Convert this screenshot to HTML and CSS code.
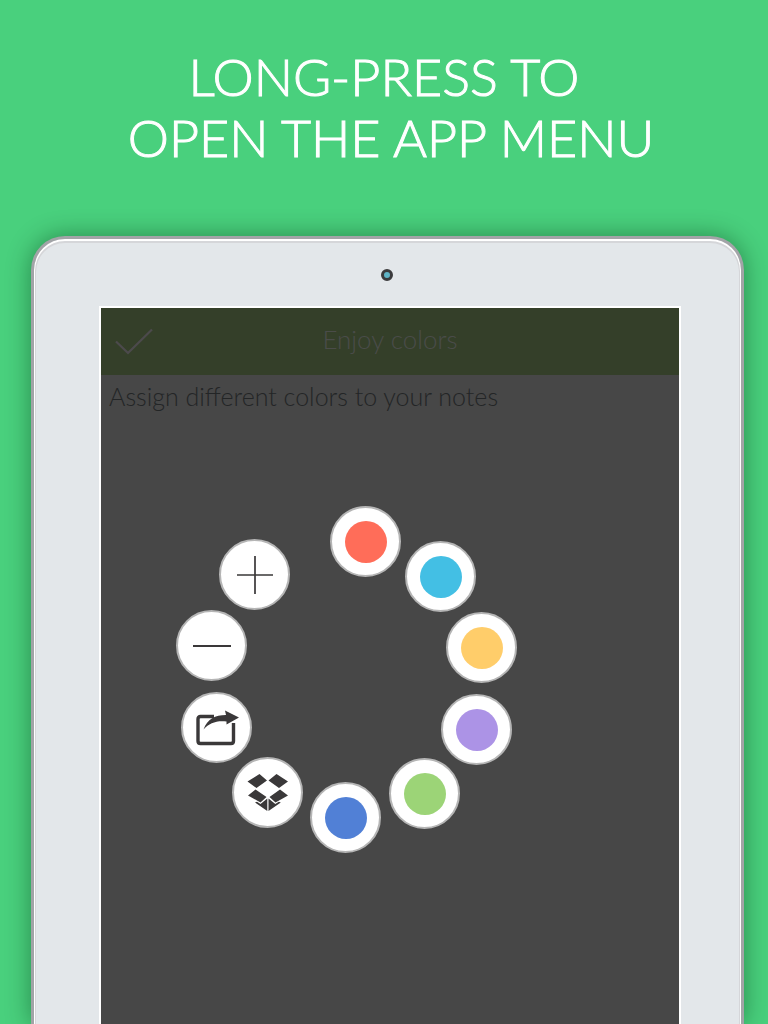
FILE: index.html
```html
<!DOCTYPE html>
<html lang="en">
<head>
<meta charset="utf-8">
<meta name="viewport" content="width=device-width, initial-scale=1">
<title>Long-press to open the app menu</title>
<link rel="stylesheet" href="styles.css">
</head>
<body class="page">
<h1 class="headline">LONG-PRESS TO&nbsp;<br>OPEN THE APP MENU</h1>
<main class="tablet">
  <div class="camera"></div>
  <section class="screen">
    <header class="toolbar">
      <button class="done" aria-label="Done">
        <svg width="38" height="28" viewBox="0 0 38 28" fill="none" stroke="currentColor" stroke-width="2.2"><path d="M1 13.500L13 25L37 1.500"/></svg>
      </button>
      <h2 class="title">Enjoy colors</h2>
    </header>
    <p class="note">Assign different colors to your notes</p>
    <nav class="ring" aria-label="App menu">
      <button class="item red" aria-label="Red"><span class="dot"></span></button>
      <button class="item cyan" aria-label="Cyan"><span class="dot"></span></button>
      <button class="item yellow" aria-label="Yellow"><span class="dot"></span></button>
      <button class="item purple" aria-label="Purple"><span class="dot"></span></button>
      <button class="item green" aria-label="Green"><span class="dot"></span></button>
      <button class="item blue" aria-label="Blue"><span class="dot"></span></button>
      <button class="item dropbox" aria-label="Dropbox">
        <svg width="42" height="38" viewBox="0 0 42 38" fill="currentColor"><path d="M12.500 0L20 6.500L9.500 14L0.500 7.500ZM29.500 0L41 7.500L32 14L21.500 6.500ZM8.500 15.500L19.500 23L13.500 28.500L1 21.500ZM33 15.500L41 21.500L28.500 28.500L22.500 23ZM8 28.500L10 27.800L13.500 30L20.300 24.500V37ZM33.800 28.500L31.800 27.800L28.300 30L21.500 24.500V37Z"/></svg>
      </button>
      <button class="item share" aria-label="Share">
        <svg width="44" height="36" viewBox="0 0 44 36"><path d="M19 6.500H5.500Q3 6.500 3 9V31Q3 33.500 5.500 33.500H36Q38.500 33.500 38.500 31V13" fill="none" stroke="currentColor" stroke-width="3.400"/><path d="M8.500 19.500C12.500 9 20 5 31 5L30 0.500L44 7.500L31.500 14.500V11.500C21 10.500 14.500 13 8.500 19.500Z" fill="currentColor"/></svg>
      </button>
      <button class="item minus" aria-label="Remove">
        <svg width="38" height="38" viewBox="0 0 38 38" stroke="currentColor" stroke-width="2"><path d="M0 19H38"/></svg>
      </button>
      <button class="item plus" aria-label="Add">
        <svg width="38" height="38" viewBox="0 0 38 38" stroke="currentColor" stroke-width="1.700"><path d="M1 19H37M19 0V38"/></svg>
      </button>
    </nav>
  </section>
</main>
</body>
</html>
```
FILE: styles.css
```css
* { box-sizing: border-box; }
.page {
  margin: 0;
  min-height: 100vh;
  display: flex;
  flex-direction: column;
  background: #49d07d;
  font-family: Lato, "Open Sans", sans-serif;
}
.headline {
  margin: 0;
  padding: 46px 0 68px 14px;
  color: #fff;
  font-size: 52px;
  font-weight: 300;
  line-height: 61px;
  text-align: center;
  -webkit-text-stroke: 1px #fff;
}
.tablet {
  flex: 1;
  display: flex;
  flex-direction: column;
  margin: 0 24px 0 31px;
  padding: 0 60px 0 65px;
  background: #e3e7ea;
  border: 3px solid #a2a4a7;
  border-bottom: 0;
  border-radius: 34px 34px 0 0;
  box-shadow: inset 0 1px 0 1px #fff, inset 0 2px 0 2px #d5d6d9, 0 0 24px rgba(0, 50, 20, 0.45);
}
.camera {
  align-self: center;
  width: 12px;
  height: 12px;
  margin: 30px 6px 25px 0;
  border: 3px solid #3b3b3d;
  border-radius: 50%;
  background: #5fb4c6;
}
.screen {
  flex: 1;
  position: relative;
  background: #474747;
  border: 2px solid #fff;
  border-bottom: 0;
}
.toolbar {
  display: grid;
  grid-template-columns: 66px 1fr 66px;
  align-items: center;
  height: 67px;
  background: #343f29;
}
.done {
  display: flex;
  justify-content: center;
  padding: 0;
  border: 0;
  background: none;
  color: #4c4a4c;
}
.title {
  grid-column: 2;
  margin: 0;
  padding-bottom: 6px;
  color: #4a4c49;
  font-size: 26px;
  font-weight: 300;
  line-height: 32px;
  text-align: center;
}
.note {
  margin: 0;
  padding: 5px 8px;
  color: #232526;
  font-size: 25px;
  font-weight: 300;
  line-height: 32px;
}
.ring {
  position: absolute;
  left: 75px;
  top: 198px;
  width: 342px;
  height: 348px;
}
.item {
  position: absolute;
  display: flex;
  align-items: center;
  justify-content: center;
  width: 71px;
  height: 71px;
  padding: 0;
  border: 2px solid #b5b5b5;
  border-radius: 50%;
  background: #fff;
  color: #3a3839;
}
.dot {
  width: 42px;
  height: 42px;
  border-radius: 50%;
}
.red { left: 154px; top: 0; }
.cyan { left: 229px; top: 35px; }
.yellow { left: 270px; top: 106px; }
.purple { left: 265px; top: 188px; }
.green { left: 213px; top: 252px; }
.blue { left: 134px; top: 276px; }
.dropbox { left: 56px; top: 251px; }
.share { left: 5px; top: 186px; }
.minus { left: 0; top: 104px; }
.plus { left: 43px; top: 33px; }
.red .dot { background: #ff6d59; }
.cyan .dot { background: #43bfe4; }
.yellow .dot { background: #ffcd6a; }
.purple .dot { background: #ac93e6; }
.green .dot { background: #9cd477; }
.blue .dot { background: #5180d6; }
```
